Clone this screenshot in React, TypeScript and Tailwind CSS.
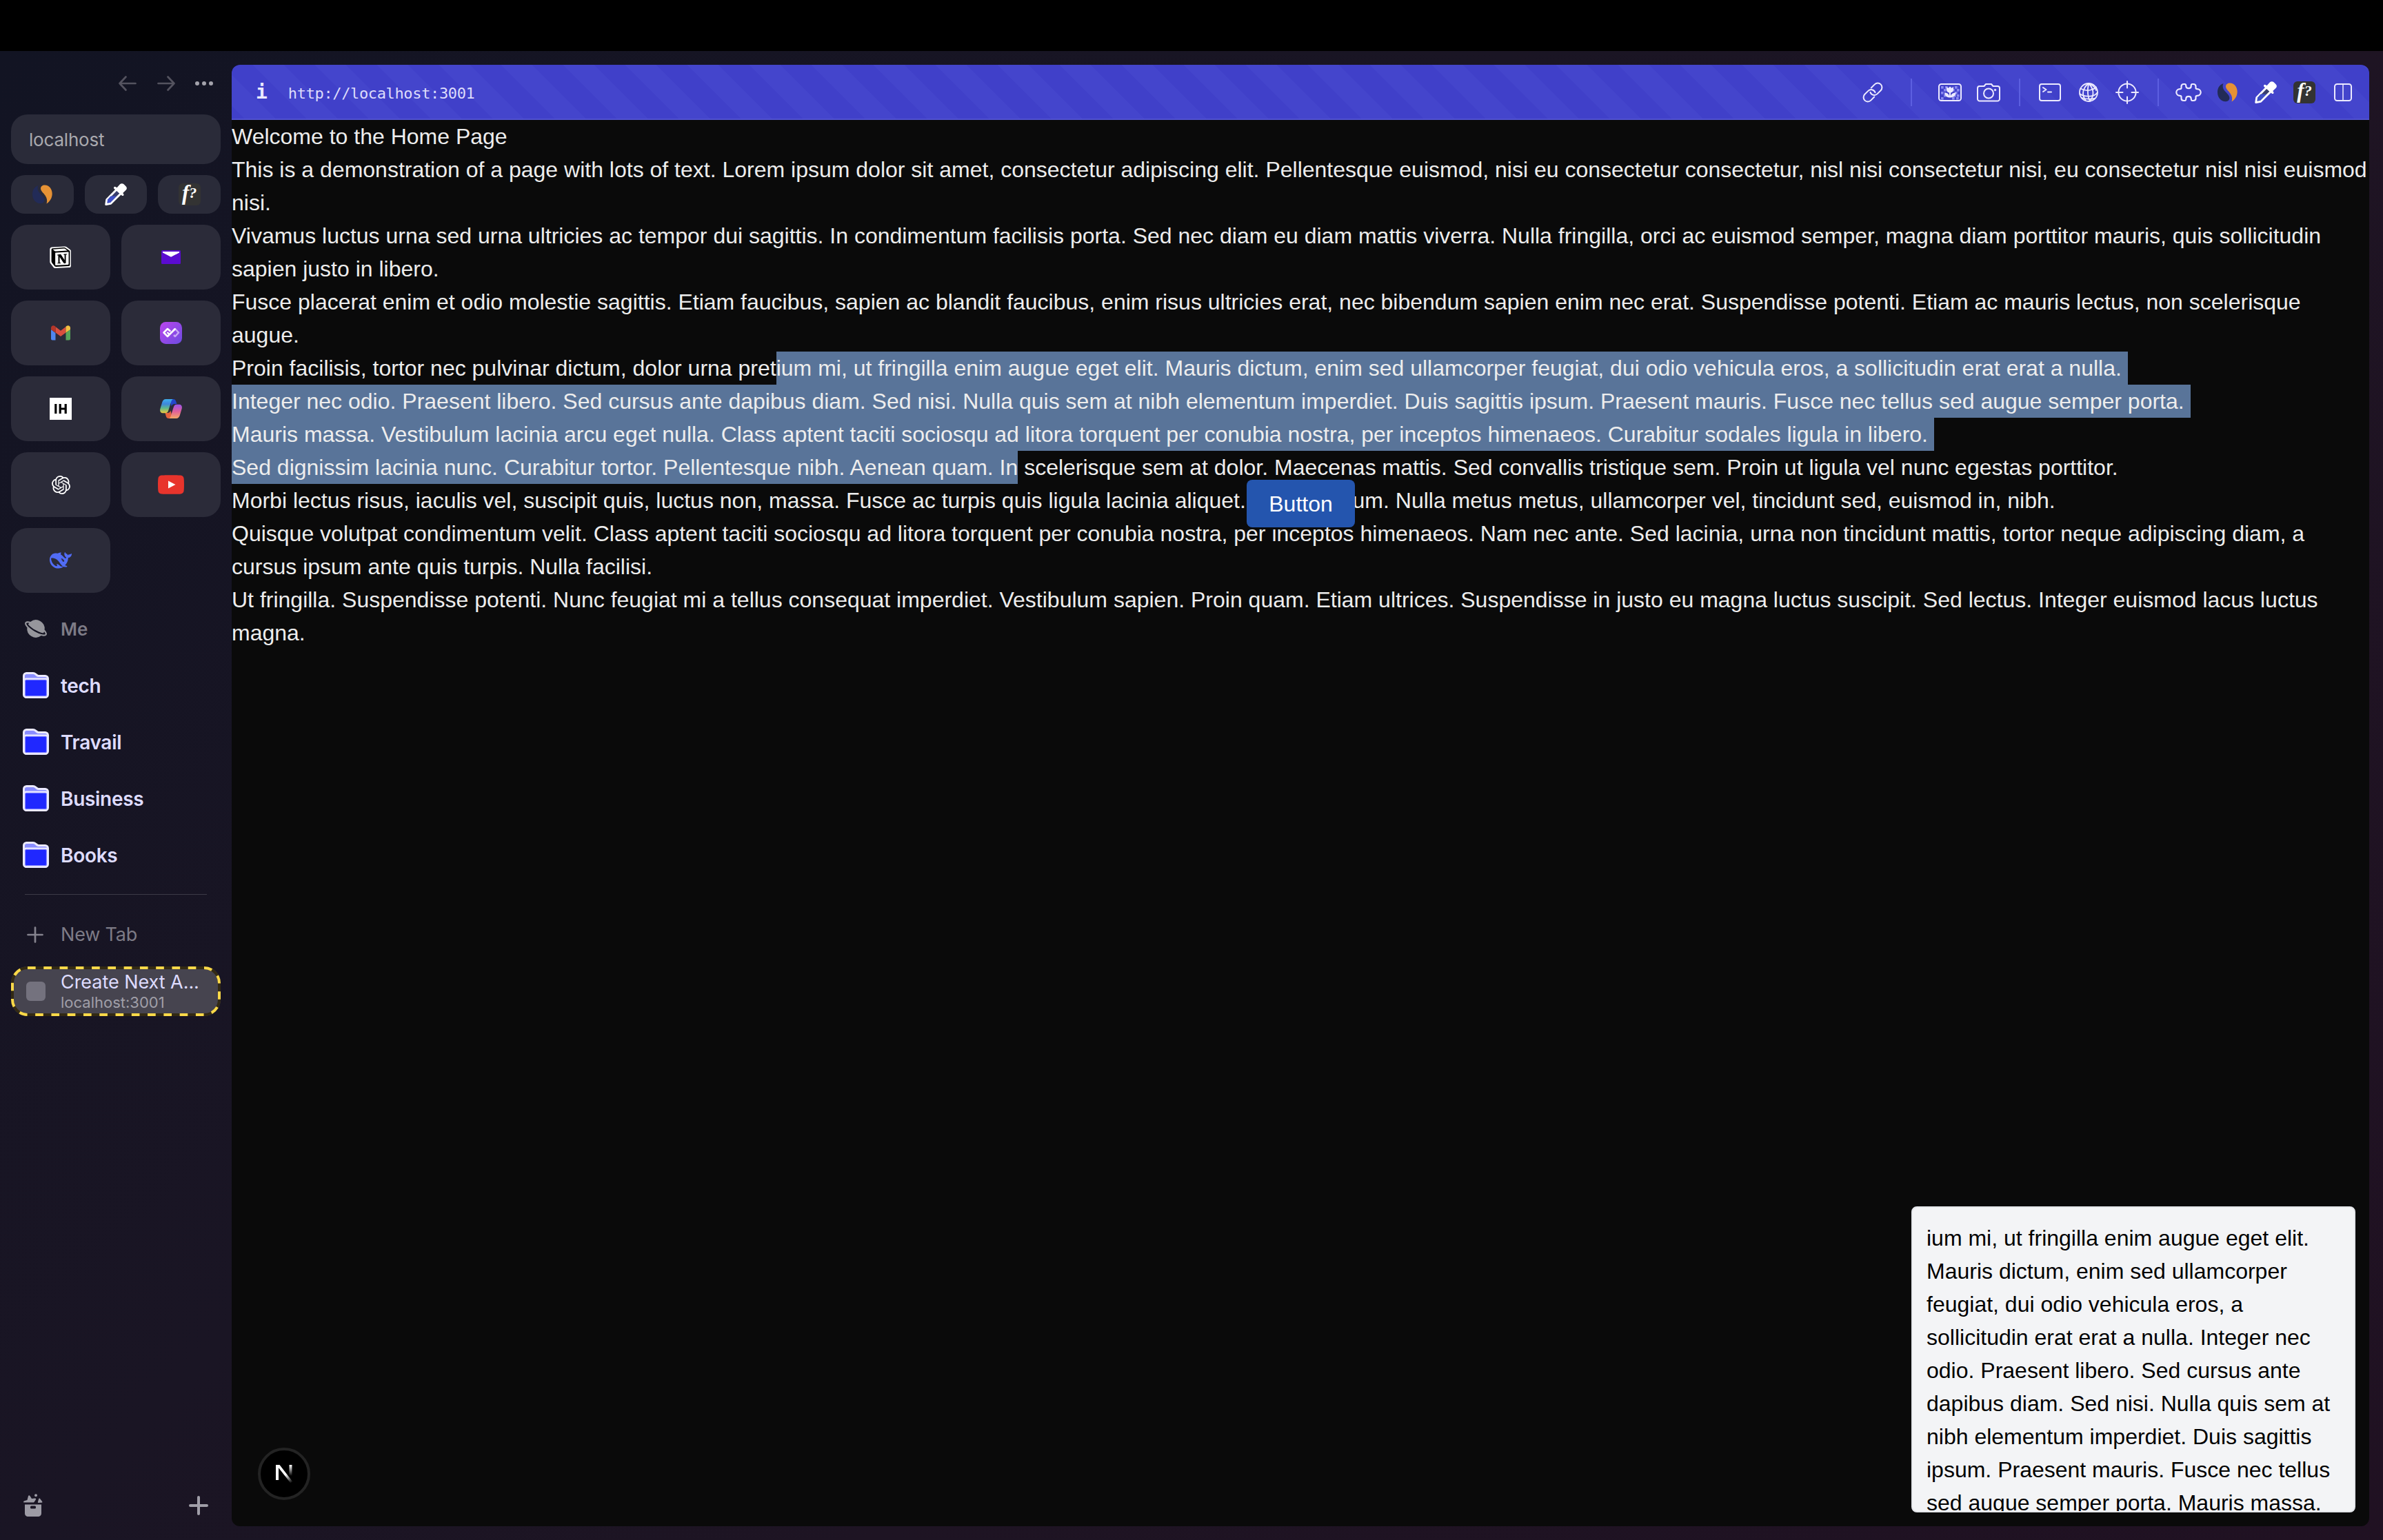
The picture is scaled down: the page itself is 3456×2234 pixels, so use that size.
import type { ReactNode } from "react";
import { SiIndiehackers, SiNotion, SiOpenai } from "react-icons/si";
import { PiPlanetFill } from "react-icons/pi";

const stroke = {
  fill: "none",
  stroke: "#eceaff",
  strokeWidth: 2,
  strokeLinecap: "round" as const,
  strokeLinejoin: "round" as const,
};

/* ---------- toolbar icons ---------- */

function LinkIcon() {
  return (
    <svg width="32" height="32" viewBox="0 0 32 32" {...stroke}>
      <g transform="rotate(-45 16 16)">
        <path d="M13 22.2H5.8a6.2 6.2 0 0 1 0-12.4h7a6.2 6.2 0 0 1 5.6 8.8" />
        <path d="M19 9.8h7.2a6.2 6.2 0 0 1 0 12.4h-7a6.2 6.2 0 0 1-5.6-8.8" />
      </g>
    </svg>
  );
}

function PictureIcon() {
  const squares = [
    [4, 6], [24, 6], [8, 10], [20, 10], [27, 10], [4, 14], [24, 14], [8, 18], [22, 18],
    [4, 22], [26, 22], [10, 6], [20, 22], [27, 18],
  ];
  return (
    <svg width="34" height="26" viewBox="0 0 34 26">
      <rect x="1" y="1" width="32" height="24" rx="3.5" {...stroke} />
      <g fill="#8a8af0">
        {squares.map(([x, y]) => (
          <rect key={`${x}-${y}`} x={x} y={y - 2} width="3.6" height="3.6" />
        ))}
      </g>
      <path d="M12 5l2.6 1.8L17 4.6l2.4 2.2L22 5v4.5a5 5 0 0 1-4 4V18c1-3 4-4.600 7.500-4.800 0 4-3 7-7.500 7.300h-2C11.500 20.200 9 17 9 13.200c3.500.2 6 1.800 7 4.800v-4.500a5 5 0 0 1-4-4z" fill="#eceaff" />
    </svg>
  );
}

function CameraIcon() {
  return (
    <svg width="34" height="28" viewBox="0 0 34 28" {...stroke}>
      <path d="M4 5h6.500L13 2h8l2.500 3H30a3 3 0 0 1 3 3v15.500a3 3 0 0 1-3 3H4a3 3 0 0 1-3-3V8a3 3 0 0 1 3-3z" />
      <circle cx="17" cy="15.500" r="7" />
      <circle cx="26.500" cy="10.500" r="1.200" fill="#eceaff" strokeWidth="1" />
    </svg>
  );
}

function TerminalIcon() {
  return (
    <svg width="32" height="26" viewBox="0 0 32 26" {...stroke}>
      <rect x="1" y="1" width="30" height="24" rx="3" />
      <path d="M6 6l4.500 3L6 12M13 12.500h5" />
    </svg>
  );
}

function GlobeIcon() {
  return (
    <svg width="30" height="30" viewBox="0 0 30 30" {...stroke} strokeWidth={1.8}>
      <circle cx="15" cy="15" r="13" />
      <path d="M15 2C10 6 7 12 7 16.500c0 4 1.500 7 3.500 9.500M15 2c-1 5-1.500 10-1 15s1.500 8 3 11M15 2c4 4 6.500 9 6.500 14 0 4-1.500 8-4.500 11.500M15 2c5 1.500 10 6 11 10" />
      <path d="M3.500 9.500C8 12 14 12.500 18 11.500S25 8.500 26 7.500M2.200 17c4 3 9 4 14.500 3.600S26 18 28 15M5.500 23c4 1.500 12 2 18.500 1" />
    </svg>
  );
}

function TargetIcon() {
  return (
    <svg width="34" height="34" viewBox="0 0 34 34" {...stroke}>
      <circle cx="17" cy="17" r="12.600" />
      <path d="M17 1v9.500M17 23.500V33M1 17h9.500M23.500 17H33" />
    </svg>
  );
}

function PuzzleIcon() {
  return (
    <svg width="38" height="28" viewBox="0 0 38 28" {...stroke} strokeWidth={2.2}>
      <path d="M12 2h1.500c1.500 0 1.800 1.200 1.800 3 0 2 1.500 3.200 3.700 3.200s3.700-1.200 3.700-3.200c0-1.800.3-3 1.800-3H26c2.500 0 3.500 1 3.500 3.500v2c0 1.200.8 1.700 2 1.700 3 0 5.200 1.900 5.200 4.800s-2.200 4.800-5.200 4.800c-1.200 0-2 .5-2 1.700v2c0 2.500-1 3.500-3.500 3.500h-1.500c-1.500 0-1.800-1.200-1.800-3 0-2-1.500-3.200-3.700-3.200S15.300 21 15.300 23c0 1.800-.3 3-1.800 3H12c-2.500 0-3.500-1-3.500-3.500v-2c0-1.200-.8-1.700-2-1.700-3 0-5.200-1.900-5.200-4.800s2.200-4.800 5.200-4.800c1.200 0 2-.5 2-1.700v-2C8.500 3 9.500 2 12 2z" />
    </svg>
  );
}

function SplitIcon() {
  return (
    <svg width="26" height="26" viewBox="0 0 26 26" {...stroke}>
      <rect x="1" y="1" width="24" height="24" rx="3.500" />
      <path d="M13 1v24" strokeWidth="1.500" />
    </svg>
  );
}

function SwirlIcon() {
  return (
    <svg width="30" height="28" viewBox="0 0 30 28">
      <path d="M9.500 1C3.500 3 1 8 1 14c0 8 5.500 13.500 12 13.200 4.500-.2 6.300-3.700 5-7.200C16.500 16.200 12 13.500 9.800 9.500 8.300 6.500 8.300 3.500 9.500 1z" fill="#222b57" />
      <path d="M13 5.500C13 2.500 15.500.5 19 .5c6.500 0 10.700 6 10.700 12.500 0 6-3.200 11.300-8.200 14.500 1.300-4 .8-8-2-12C17 11.800 13 9 13 5.500z" fill="#e69235" />
    </svg>
  );
}

function DropperIcon() {
  return (
    <svg width="32" height="32" viewBox="0 0 32 32">
      <path d="M17.500 8.500L2.800 23.500 1.800 30.500l6.800-1.200L23.500 14.500z" fill="#3a3f6d" stroke="#fff" strokeWidth="3" strokeLinejoin="round" />
      <path d="M8.500 18.500h8.500L8 28l-4.500.5.500-5z" fill="#3f50c8" />
      <path d="M13 6.500c0-1.500 1.500-2.500 3-1.200l1.500 1L22 1.200C23.500-.2 26-.2 27.600 1.200l3.200 3.200c1.500 1.600 1.400 4-.2 5.400l-4.400 4.100 1 1.600c1 1.500-.5 3-2 2.500l-12-10.500c-.2-.3-.2-.7-.2-1z" fill="#fff" />
    </svg>
  );
}

function WhatFontIcon() {
  return (
    <span className="flex h-8 w-8 items-center justify-center rounded-md bg-[#333333] pb-1 font-['Liberation_Serif',serif] font-bold leading-8 text-white italic">
      <span className="text-[31px]">f</span>
      <span className="text-[22px]">?</span>
    </span>
  );
}

/* ---------- sidebar icons ---------- */

function NotionLogo() {
  return (
    <span className="relative flex h-8 w-8 items-center justify-center">
      <svg width="32" height="32" viewBox="0 0 32 32" className="absolute">
        <path d="M3.500 1.600L22 .4c1 0 1.800.2 2.600.8l5 3.700c.9.700 1.300 1.400 1.300 2.500v21c0 1.600-.9 2.600-2.500 2.700L8.500 32c-1.300 0-2.200-.3-3-1.300l-4.300-5.500C.5 24.200.3 23.500.3 22.500V4.800c0-1.800 1-3 3.200-3.200z" fill="#fff" />
      </svg>
      <SiNotion size={28} color="#000" className="relative" />
    </span>
  );
}

function MailLogo() {
  return (
    <svg width="28" height="20" viewBox="0 0 28 20">
      <rect width="28" height="20" rx="1.500" fill="#5b0bd0" />
      <path d="M2 2h24v1.500L14 9.800 2 3.500z" fill="#fff" />
    </svg>
  );
}

function GmailLogo() {
  return (
    <svg width="28" height="22" viewBox="0 0 28 22">
      <path d="M0 6l6.500 5v10.500H2c-1.200 0-2-.8-2-2z" fill="#4f86ee" />
      <path d="M28 6l-6.500 5v10.500H26c1.200 0 2-.8 2-2z" fill="#57a65a" />
      <path d="M6.500 2l7.500 5.700L21.500 2v8.500L14 16l-7.500-5.500z" fill="#d94f3e" />
      <path d="M0 3.500C0 .7 3.200-.9 5.500.9l1 .8v9L0 5.900z" fill="#b53629" />
      <path d="M28 3.500C28 .7 24.800-.9 22.500.9l-1 .8v9L28 5.900z" fill="#f2c042" />
    </svg>
  );
}

function LoopLogo() {
  return (
    <svg width="32" height="32" viewBox="0 0 32 32">
      <defs>
        <linearGradient id="loop" x1="0" y1="0" x2="1" y2="1">
          <stop offset="0" stopColor="#bb45ee" />
          <stop offset="1" stopColor="#6c4ce0" />
        </linearGradient>
      </defs>
      <rect width="32" height="32" rx="8.500" fill="url(#loop)" />
      <path d="M19.500 12.500L22 10l5 5.500-5 5.500-2-2" fill="none" stroke="#c9a8f5" strokeWidth="2.500" strokeLinejoin="round" />
      <path d="M14.500 13L11 10l-5.500 5.500L11 21 21.500 10.500" fill="none" stroke="#fff" strokeWidth="2.600" strokeLinecap="round" strokeLinejoin="round" />
      <path d="M10.500 15l3 3" fill="none" stroke="#fff" strokeWidth="2.400" />
    </svg>
  );
}

function CopilotLogo() {
  return (
    <svg width="32" height="28" viewBox="0 0 32 28">
      <defs>
        <linearGradient id="cpA" x1="0" y1="0" x2="0" y2="1">
          <stop offset="0" stopColor="#3fb0ee" />
          <stop offset=".35" stopColor="#3d86dd" />
          <stop offset=".65" stopColor="#5fb98a" />
          <stop offset="1" stopColor="#f0c83c" />
        </linearGradient>
        <linearGradient id="cpB" x1="0" y1="0" x2="0" y2="1">
          <stop offset="0" stopColor="#9a55ea" />
          <stop offset=".5" stopColor="#e0609a" />
          <stop offset="1" stopColor="#f3a865" />
        </linearGradient>
      </defs>
      <path d="M14 0h5.500c2.200 0 3.200 1.500 3.800 3.500L24.500 7H21c-2.500 0-3.500 1.500-4.200 3.500z" fill="#2347c9" />
      <path d="M18 28h-5.500c-2.200 0-3.200-1.500-3.800-3.500L7.500 20H11c2.500 0 3.800-1.500 4.500-3.500z" fill="#e5633d" />
      <path d="M8.500 0H19c-1.500.6-2.200 2-2.800 4l-4 12.500c-.8 2.500-2 3.800-4.500 3.800H4c-3 0-4.500-2.500-3.700-6L3.200 4.500C4 1.800 5.800 0 8.500 0z" fill="url(#cpA)" />
      <path d="M23.500 28H13c1.500-.6 2.200-2 2.800-4l4-12.500c.8-2.500 2-3.800 4.500-3.800H28c3 0 4.500 2.500 3.700 6l-2.900 9.800c-.8 2.700-2.600 4.500-5.300 4.500z" fill="url(#cpB)" />
    </svg>
  );
}

function YoutubeLogo() {
  return (
    <svg width="38" height="28" viewBox="0 0 38 28">
      <path d="M5 .6C9 0 29 0 33 .6c2.800.4 4.300 1.900 4.600 4.400.5 4 .5 14 0 18-.3 2.500-1.800 4-4.600 4.400-4 .6-24 .6-28 0C2.200 27 .7 25.500.4 23c-.5-4-.5-14 0-18C.7 2.500 2.200 1 5 .6z" fill="#e8342c" />
      <path d="M15 8.500v11L25.500 14z" fill="#fff" />
    </svg>
  );
}

function WhaleLogo() {
  return (
    <svg width="32" height="32" viewBox="0 0 24 24" fill="#516cf5">
      <path d="M23.748 4.482c-.254-.124-.364.113-.512.234-.051.039-.094.09-.137.136-.372.397-.806.657-1.373.626-.829-.046-1.537.214-2.163.848-.133-.782-.575-1.248-1.247-1.548-.352-.156-.708-.311-.955-.65-.172-.241-.219-.51-.305-.774-.055-.16-.11-.323-.293-.35-.2-.031-.278.136-.356.276-.313.572-.434 1.202-.422 1.84.027 1.436.633 2.58 1.838 3.393.137.093.172.187.129.323-.082.28-.18.552-.266.833-.055.179-.137.217-.329.14a5.526 5.526 0 01-1.736-1.18c-.857-.828-1.631-1.742-2.597-2.458a11.365 11.365 0 00-.689-.471c-.985-.957.13-1.743.388-1.836.27-.098.093-.432-.779-.428-.872.004-1.67.295-2.687.684a3.055 3.055 0 01-.465.137 9.597 9.597 0 00-2.883-.102c-1.885.21-3.39 1.102-4.497 2.623C.082 8.606-.231 10.684.152 12.85c.403 2.284 1.569 4.175 3.36 5.653 1.858 1.533 3.997 2.284 6.438 2.14 1.482-.085 3.133-.284 4.994-1.86.47.234.962.327 1.78.397.63.059 1.236-.03 1.705-.128.735-.156.684-.837.419-.961-2.155-1.004-1.682-.595-2.113-.926 1.096-1.296 2.746-2.642 3.392-7.003.05-.347.007-.565 0-.845-.004-.17.035-.237.23-.256a4.173 4.173 0 001.545-.475c1.396-.763 1.96-2.015 2.093-3.517.02-.23-.004-.467-.247-.588zM11.581 18c-2.089-1.642-3.102-2.183-3.52-2.16-.392.024-.321.471-.235.763.09.288.207.486.371.739.114.167.192.416-.113.603-.673.416-1.842-.14-1.897-.167-1.361-.802-2.5-1.86-3.301-3.307-.774-1.393-1.224-2.887-1.298-4.482-.02-.386.093-.522.477-.592a4.696 4.696 0 011.529-.039c2.132.312 3.946 1.265 5.468 2.774.868.86 1.525 1.887 2.202 2.891.72 1.066 1.494 2.082 2.48 2.914.348.292.625.514.891.677-.802.09-2.14.11-3.054-.614zm1-6.44a.306.306 0 01.415-.287.302.302 0 01.2.288.306.306 0 01-.31.307.303.303 0 01-.304-.308zm3.11 1.596c-.2.081-.399.151-.59.16a1.245 1.245 0 01-.798-.254c-.274-.23-.47-.358-.552-.758a1.73 1.73 0 01.016-.588c.07-.327-.008-.537-.239-.727-.187-.156-.426-.199-.688-.199a.559.559 0 01-.254-.078c-.11-.054-.2-.19-.114-.358.028-.054.16-.186.192-.21.356-.202.767-.136 1.146.016.352.144.618.408 1.001.782.391.451.462.576.685.914.176.265.336.537.445.848.067.195-.019.354-.25.452z" />
    </svg>
  );
}

function FolderIcon() {
  return (
    <svg width="38" height="38" viewBox="0 0 38 38">
      <path d="M1.500 10V5.500a4 4 0 0 1 4-4H15c1.500 0 2.500.4 3.500 1.300l2 1.700c.8.700 1.500 1 2.500 1h9.500a4 4 0 0 1 4 4V32.500a4 4 0 0 1-4 4h-27a4 4 0 0 1-4-4z" fill="#8a8dff" stroke="#eceaff" strokeWidth="3" />
      <rect x="2" y="9.700" width="34" height="26.500" rx="3" fill="#2028ff" stroke="#eceaff" strokeWidth="2.500" />
      <rect x="3.600" y="11.300" width="30.800" height="23.300" rx="2" fill="none" stroke="#8a8dff" strokeWidth="1" />
    </svg>
  );
}

function ArrowIcon({ flip = false }: { flip?: boolean }) {
  return (
    <svg width="28" height="24" viewBox="0 0 28 24" className={flip ? "-scale-x-100" : ""} fill="none" stroke="#54535f" strokeWidth="2.700" strokeLinecap="round" strokeLinejoin="round">
      <path d="M11.500 2.500L2.500 12l9 9.500M2.500 12H25.500" />
    </svg>
  );
}

function ArchiveIcon() {
  return (
    <svg width="28" height="34" viewBox="0 0 28 34" fill="#9d9ba5">
      <path d="M2 15.500h24V28c0 3.500-2 5-5 5H7c-3 0-5-1.500-5-5zM11.500 17.500a1.500 1.500 0 0 0-1.500 1.500v1a1.500 1.500 0 0 0 1.500 1.500h5a1.500 1.500 0 0 0 1.500-1.500v-1a1.500 1.500 0 0 0-1.500-1.500z" fillRule="evenodd" />
      <path d="M.3 12.500c-.6-1 .2-1.800 1.200-2.200L5.500 9 7 3.200c.4-1.300 1.800-1.300 2.400-.2L12 7l4.500-.5c1.500 0 2 1 1.200 2.200L15.500 12c-.4.400-.8.500-1.200.5z" />
      <circle cx="18" cy="2.200" r="2" />
      <path d="M22.200 7.200c.5-1 1.500-.9 2 0l3 4c.5 1 0 1.500-1 1.500l-4.200.3c-1 0-1.300-.5-1-1.500z" />
    </svg>
  );
}

function NextLogo() {
  return (
    <svg width="26" height="28" viewBox="0 0 26 28">
      <defs>
        <linearGradient id="nx1" x1="0" y1="0" x2="0" y2="1">
          <stop offset="0" stopColor="#fff" />
          <stop offset="1" stopColor="#fff" stopOpacity="0" />
        </linearGradient>
        <linearGradient id="nx2" gradientUnits="userSpaceOnUse" x1="15" y1="15" x2="24" y2="27">
          <stop offset="0" stopColor="#fff" />
          <stop offset="1" stopColor="#fff" stopOpacity="0" />
        </linearGradient>
      </defs>
      <rect x="1" y="1" width="4" height="22" fill="#fff" />
      <path d="M1 1h5.500L25.500 25.500l-3 2L4 4z" fill="url(#nx2)" />
      <rect x="20.500" y="1" width="4" height="16" fill="url(#nx1)" />
    </svg>
  );
}

/* ---------- building blocks ---------- */

function Tool({ children }: { children: ReactNode }) {
  return <span className="flex w-14 items-center justify-center">{children}</span>;
}

function Tile({ children, small = false }: { children: ReactNode; small?: boolean }) {
  return (
    <div
      className={
        small
          ? "flex h-14 items-center justify-center rounded-[20px] bg-[#2a2b39]"
          : "flex h-[94px] items-center justify-center rounded-3xl bg-[#2b2b39]"
      }
    >
      {children}
    </div>
  );
}

function Line({ children }: { children: ReactNode }) {
  return <p className="flex h-12 whitespace-pre">{children}</p>;
}

function Marked({ children }: { children: ReactNode }) {
  return <span className="bg-[#597499]">{children}</span>;
}

function Sidebar() {
  return (
    <aside className="flex w-[336px] shrink-0 flex-col px-4 pb-[33px] font-[Inter,sans-serif]">
      <div className="flex h-[92px] items-center justify-end gap-[28px] pt-0.5 pr-[11px]">
        <ArrowIcon />
        <ArrowIcon flip />
        <span className="flex gap-1">
          <i className="h-1.5 w-1.5 rounded-full bg-[#a3a2ab]" />
          <i className="h-1.5 w-1.5 rounded-full bg-[#a3a2ab]" />
          <i className="h-1.5 w-1.5 rounded-full bg-[#a3a2ab]" />
        </span>
      </div>

      <div className="flex h-[72px] items-center rounded-3xl bg-[#2a2b39] px-[26px] text-[26px] tracking-[-0.2px] text-[#a9a9ae]">localhost</div>

      <div className="mt-4 grid grid-cols-3 gap-4">
        <Tile small><SwirlIcon /></Tile>
        <Tile small><DropperIcon /></Tile>
        <Tile small><WhatFontIcon /></Tile>
      </div>

      <div className="mt-4 grid grid-cols-2 gap-4">
        <Tile><NotionLogo /></Tile>
        <Tile><MailLogo /></Tile>
        <Tile><GmailLogo /></Tile>
        <Tile><LoopLogo /></Tile>
        <Tile>
          <span className="bg-black"><SiIndiehackers size={32} color="#fff" /></span>
        </Tile>
        <Tile><CopilotLogo /></Tile>
        <Tile><SiOpenai size={27} color="#fff" /></Tile>
        <Tile><YoutubeLogo /></Tile>
        <Tile><WhaleLogo /></Tile>
      </div>

      <div className="mt-[11px] flex h-[82px] items-center text-[26px] font-semibold text-[#7d7b86]">
        <span className="flex w-[72px] justify-center">
          <PiPlanetFill size={34} color="#96969c" className="-scale-x-100" />
        </span>
        Me
      </div>
      {["tech", "Travail", "Business", "Books"].map((name) => (
        <div key={name} className="flex h-[82px] items-center pl-[17px] text-[28px] font-semibold tracking-[-0.3px] text-[#dedcff]">
          <span className="w-[55px]"><FolderIcon /></span>
          <span className="pt-0.5">{name}</span>
        </div>
      ))}

      <div className="mx-5 mt-4 h-px bg-[#3c3a47]" />

      <div className="mt-[17px] flex h-[82px] items-center pl-[23px] text-[27px] tracking-[-0.2px] text-[#7d7b86]">
        <svg width="24" height="24" viewBox="0 0 24 24" className="mr-[25px]" stroke="#85838e" strokeWidth="2.700" strokeLinecap="round">
          <path d="M12 1.500v21M1.500 12h21" />
        </svg>
        New Tab
      </div>

      <div className="relative mt-[5px] flex h-[72px] items-center rounded-3xl bg-[#46444f] pl-[22px]">
        <svg width="304" height="72" viewBox="0 0 304 72" fill="none" strokeWidth="4" className="absolute inset-0">
          <rect x="2" y="2" width="300" height="68" rx="22" stroke="#332a14" />
          <rect x="2" y="2" width="300" height="68" rx="22" stroke="#fbd949" strokeDasharray="11.637 11.637" />
        </svg>
        <span className="h-7 w-7 rounded-md bg-[#74727e]" />
        <span className="ml-[22px] flex flex-col">
          <span className="text-[27px] leading-[32px] tracking-[-0.05px] text-[#dedcff]">Create Next A...</span>
          <span className="text-[22px] leading-[26px] text-[#a09fa8]">localhost:3001</span>
        </span>
      </div>

      <div className="mt-auto flex items-center justify-between px-[18px]">
        <ArchiveIcon />
        <svg width="28" height="28" viewBox="0 0 28 28" stroke="#a09ea8" strokeWidth="4" strokeLinecap="round">
          <path d="M14 2v24M2 14h24" />
        </svg>
      </div>
    </aside>
  );
}

function Toolbar() {
  return (
    <header className="flex h-20 shrink-0 items-center bg-[repeating-linear-gradient(45deg,#4040c9_0_14.35px,#4445cc_14.35px_46.2px,#4040c9_46.2px_63.65px)] pr-2.5 font-['DejaVu_Sans_Mono',monospace] shadow-[inset_0_-2px_0_#5152cf]">
      <span className="ml-[35px] text-[28px] font-bold text-[#eceaff]">i</span>
      <span className="ml-[30px] pt-[3px] text-[22px] tracking-[-0.36px] text-[#dddcfb]">http://localhost:3001</span>
      <div className="ml-auto flex items-center">
        <Tool><LinkIcon /></Tool>
        <span className="mx-[27px] h-10 w-0.5 bg-[#5c5fe0]" />
        <Tool><PictureIcon /></Tool>
        <Tool><CameraIcon /></Tool>
        <span className="mr-[15px] ml-4 h-10 w-0.5 bg-[#5c5fe0]" />
        <Tool><TerminalIcon /></Tool>
        <Tool><GlobeIcon /></Tool>
        <Tool><TargetIcon /></Tool>
        <span className="mr-[15px] ml-4 h-10 w-0.5 bg-[#5c5fe0]" />
        <Tool><PuzzleIcon /></Tool>
        <Tool><SwirlIcon /></Tool>
        <Tool><DropperIcon /></Tool>
        <Tool><WhatFontIcon /></Tool>
        <Tool><SplitIcon /></Tool>
      </div>
    </header>
  );
}

export default function App() {
  return (
    <div className="flex h-[2234px] w-[3456px] flex-col overflow-hidden bg-black pt-[74px]">
      <div className="flex min-h-0 flex-1 bg-[linear-gradient(135deg,#121423_0%,#1a1524_39%,#1e1423_61%,#201122_100%)]">
        <Sidebar />
        <div className="flex-1 pt-5 pr-5 pb-5">
          <main className="relative flex h-full flex-col overflow-hidden rounded-xl bg-[#0a0a0a] font-['Liberation_Sans',Arial,sans-serif] text-[32px] leading-[48px] text-[#ededed]">
            <Toolbar />
            <div>
              <p>Welcome to the Home Page</p>
              <p>This is a demonstration of a page with lots of text. Lorem ipsum dolor sit amet, consectetur adipiscing elit. Pellentesque euismod, nisi eu consectetur consectetur, nisl nisi consectetur nisi, eu consectetur nisl nisi euismod nisi.</p>
              <p>Vivamus luctus urna sed urna ultricies ac tempor dui sagittis. In condimentum facilisis porta. Sed nec diam eu diam mattis viverra. Nulla fringilla, orci ac euismod semper, magna diam porttitor mauris, quis sollicitudin sapien justo in libero.</p>
              <p>Fusce placerat enim et odio molestie sagittis. Etiam faucibus, sapien ac blandit faucibus, enim risus ultricies erat, nec bibendum sapien enim nec erat. Suspendisse potenti. Etiam ac mauris lectus, non scelerisque augue.</p>
              <Line>
                <span>Proin facilisis, tortor nec pulvinar dictum, dolor urna pret</span>
                <Marked>{"ium mi, ut fringilla enim augue eget elit. Mauris dictum, enim sed ullamcorper feugiat, dui odio vehicula eros, a sollicitudin erat erat a nulla. "}</Marked>
              </Line>
              <Line>
                <Marked>{"Integer nec odio. Praesent libero. Sed cursus ante dapibus diam. Sed nisi. Nulla quis sem at nibh elementum imperdiet. Duis sagittis ipsum. Praesent mauris. Fusce nec tellus sed augue semper porta. "}</Marked>
              </Line>
              <Line>
                <Marked>{"Mauris massa. Vestibulum lacinia arcu eget nulla. Class aptent taciti sociosqu ad litora torquent per conubia nostra, per inceptos himenaeos. Curabitur sodales ligula in libero. "}</Marked>
              </Line>
              <Line>
                <Marked>Sed dignissim lacinia nunc. Curabitur tortor. Pellentesque nibh. Aenean quam. In</Marked>
                <span> scelerisque sem at dolor. Maecenas mattis. Sed convallis tristique sem. Proin ut ligula vel nunc egestas porttitor.</span>
              </Line>
              <p>Morbi lectus risus, iaculis vel, suscipit quis, luctus non, massa. Fusce ac turpis quis ligula lacinia aliquet. Mauris ipsum. Nulla metus metus, ullamcorper vel, tincidunt sed, euismod in, nibh.</p>
              <p>Quisque volutpat condimentum velit. Class aptent taciti sociosqu ad litora torquent per conubia nostra, per inceptos himenaeos. Nam nec ante. Sed lacinia, urna non tincidunt mattis, tortor neque adipiscing diam, a cursus ipsum ante quis turpis. Nulla facilisi.</p>
              <p>Ut fringilla. Suspendisse potenti. Nunc feugiat mi a tellus consequat imperdiet. Vestibulum sapien. Proin quam. Etiam ultrices. Suspendisse in justo eu magna luctus suscipit. Sed lectus. Integer euismod lacus luctus magna.</p>
            </div>

            <button className="absolute top-[602px] left-[1472px] flex h-[69px] w-[157px] items-center justify-center rounded-lg bg-[#2455ae] text-white">Button</button>

            <div className="absolute bottom-[38px] left-[38px] flex h-[76px] w-[76px] items-center justify-center rounded-full border-4 border-[#232323] bg-black">
              <NextLogo />
            </div>

            <div className="absolute right-5 bottom-5 h-[444px] w-[644px] overflow-hidden rounded-lg border-2 border-[#e5e7eb] bg-[#f3f4f6] p-5 text-black">
              ium mi, ut fringilla enim augue eget elit. Mauris dictum, enim sed ullamcorper feugiat, dui odio vehicula eros, a sollicitudin erat erat a nulla. Integer nec odio. Praesent libero. Sed cursus ante dapibus diam. Sed nisi. Nulla quis sem at nibh elementum imperdiet. Duis sagittis ipsum. Praesent mauris. Fusce nec tellus sed augue semper porta. Mauris massa.
            </div>
          </main>
        </div>
      </div>
    </div>
  );
}
